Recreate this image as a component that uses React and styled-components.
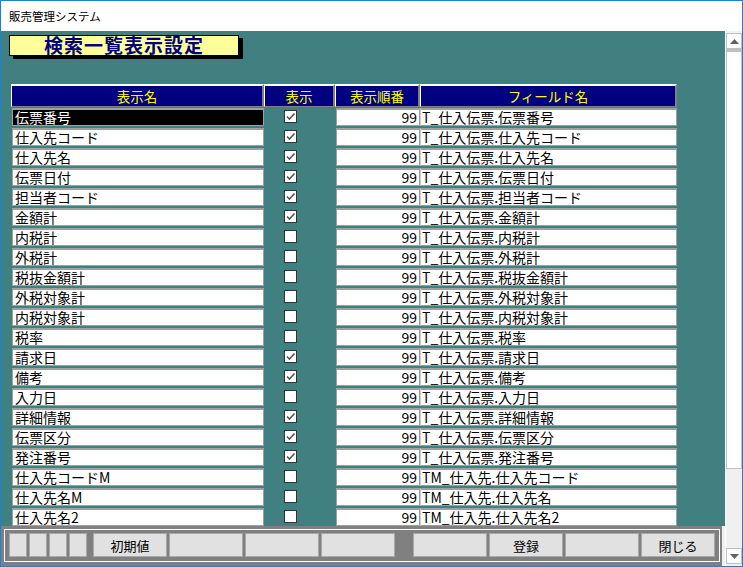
import React from 'react';
import styled, { createGlobalStyle } from 'styled-components';

const rows = [
    { name: '伝票番号', on: true, field: 'T_仕入伝票.伝票番号' },
    { name: '仕入先コード', on: true, field: 'T_仕入伝票.仕入先コード' },
    { name: '仕入先名', on: true, field: 'T_仕入伝票.仕入先名' },
    { name: '伝票日付', on: true, field: 'T_仕入伝票.伝票日付' },
    { name: '担当者コード', on: true, field: 'T_仕入伝票.担当者コード' },
    { name: '金額計', on: true, field: 'T_仕入伝票.金額計' },
    { name: '内税計', on: false, field: 'T_仕入伝票.内税計' },
    { name: '外税計', on: false, field: 'T_仕入伝票.外税計' },
    { name: '税抜金額計', on: false, field: 'T_仕入伝票.税抜金額計' },
    { name: '外税対象計', on: false, field: 'T_仕入伝票.外税対象計' },
    { name: '内税対象計', on: false, field: 'T_仕入伝票.内税対象計' },
    { name: '税率', on: false, field: 'T_仕入伝票.税率' },
    { name: '請求日', on: true, field: 'T_仕入伝票.請求日' },
    { name: '備考', on: true, field: 'T_仕入伝票.備考' },
    { name: '入力日', on: false, field: 'T_仕入伝票.入力日' },
    { name: '詳細情報', on: true, field: 'T_仕入伝票.詳細情報' },
    { name: '伝票区分', on: true, field: 'T_仕入伝票.伝票区分' },
    { name: '発注番号', on: true, field: 'T_仕入伝票.発注番号' },
    { name: '仕入先コードM', on: false, field: 'TM_仕入先.仕入先コード' },
    { name: '仕入先名M', on: false, field: 'TM_仕入先.仕入先名' },
    { name: '仕入先名2', on: false, field: 'TM_仕入先.仕入先名2' },
];

const App = () => {
    return (
        <>
            <GlobalStyle />
            <Window>
                <TitleBar>販売管理システム</TitleBar>
                <Client>
                    <Content>
                        <FormBody>
                            <Caption>検索一覧表示設定</Caption>
                            <Header>
                                <HeadCell>表示名</HeadCell>
                                <HeadCell>表示</HeadCell>
                                <HeadCell>表示順番</HeadCell>
                                <HeadCell>フィールド名</HeadCell>
                            </Header>
                            <RowList>
                                {rows.map((r, i) => (
                                    <Row key={r.name}>
                                        <NameBox selected={i === 0}>{r.name}</NameBox>
                                        <CheckCell>
                                            <CheckBox>
                                                {r.on && (
                                                    <svg width="11" height="11" viewBox="0 0 11 11">
                                                        <path d="M2 5.5 L4.5 8 L9.5 2.5" fill="none" stroke="#555" strokeWidth="1.6" />
                                                    </svg>
                                                )}
                                            </CheckBox>
                                        </CheckCell>
                                        <OrderBox>99</OrderBox>
                                        <FieldBox>{r.field}</FieldBox>
                                    </Row>
                                ))}
                            </RowList>
                        </FormBody>
                        <Footer>
                            <ButtonFrame>
                                <SmallGroup>
                                    <SmallButton />
                                    <SmallButton />
                                    <SmallButton />
                                    <SmallButton />
                                </SmallGroup>
                                <BigGroup>
                                    <Button>初期値</Button>
                                    <Button />
                                    <Button />
                                    <Button />
                                </BigGroup>
                                <BigGroup>
                                    <Button />
                                    <Button>登録</Button>
                                    <Button />
                                    <Button>閉じる</Button>
                                </BigGroup>
                            </ButtonFrame>
                        </Footer>
                    </Content>
                    <ScrollBar>
                        <ArrowButton>
                            <svg width="9" height="5" viewBox="0 0 9 5"><path d="M0 5 L4.5 0 L9 5 Z" fill="#606060" /></svg>
                        </ArrowButton>
                        <Thumb />
                        <Track />
                        <ArrowButton>
                            <svg width="9" height="5" viewBox="0 0 9 5"><path d="M0 0 L9 0 L4.5 5 Z" fill="#606060" /></svg>
                        </ArrowButton>
                    </ScrollBar>
                </Client>
            </Window>
        </>
    )
}

const GlobalStyle = createGlobalStyle`
    body {
        margin: 0;
        font-family: "Noto Sans CJK JP", "Liberation Sans", sans-serif;
    }
    * {
        box-sizing: border-box;
    }
`

const Window = styled.div`
    width: 743px;
    height: 567px;
    border: 1px solid #1883d7;
    display: flex;
    flex-direction: column;
    background: #fff;
`

const TitleBar = styled.div`
    height: 30px;
    padding-left: 8px;
    display: flex;
    align-items: center;
    font-size: 11.5px;
    color: #000;
`

const Client = styled.div`
    flex: 1;
    display: flex;
    min-height: 0;
`

const Content = styled.div`
    width: 724px;
    display: flex;
    flex-direction: column;
    background: #f0f0f0;
`

const FormBody = styled.div`
    flex: 1;
    min-height: 0;
    overflow: hidden;
    background: #408080;
    padding: 4px 0 0 10px;
`

const Caption = styled.div`
    margin-left: -2px;
    width: 230px;
    height: 21px;
    border: 1px solid #000;
    background: #ffff99;
    box-shadow: 4px 3px 0 #000;
    color: #000080;
    font-size: 19px;
    font-weight: bold;
    letter-spacing: 1px;
    line-height: 18px;
    text-align: center;
`

const columns = '253px 71px 85px 257px';

const Header = styled.div`
    margin-top: 28px;
    display: grid;
    grid-template-columns: ${columns};
    height: 21px;
`

const HeadCell = styled.div`
    background: #000080;
    color: #ffff00;
    font-size: 13.5px;
    display: flex;
    align-items: center;
    justify-content: center;
    border-top: 2px solid #fff;
    border-left: 1px solid #fff;
    border-right: 2px solid #808080;
    border-bottom: 1px solid #808080;
`

const RowList = styled.div`
    margin-top: 3px;
    display: flex;
    flex-direction: column;
`

const Row = styled.div`
    display: grid;
    grid-template-columns: ${columns};
    height: 20px;
`

const Box = styled.div`
    height: 18px;
    border: 1px solid #a0a0a0;
    box-shadow: inset 0 1px 0 #a0a0a0;
    background: #fff;
    color: #000;
    font-size: 14px;
    line-height: 16px;
    white-space: nowrap;
    overflow: hidden;
`

const NameBox = styled(Box)`
    margin-left: 1px;
    padding-left: 2px;
    background: ${p => (p.selected ? '#000' : '#fff')};
    color: ${p => (p.selected ? '#fff' : '#000')};
`

const CheckCell = styled.div`
    padding-left: 20px;
    padding-top: 2px;
`

const CheckBox = styled.div`
    width: 13px;
    height: 13px;
    border: 1px solid #333;
    background: #fff;
    display: flex;
    align-items: center;
    justify-content: center;
`

const OrderBox = styled(Box)`
    margin-left: 1px;
    text-align: right;
    padding-right: 2px;
`

const FieldBox = styled(Box)`
    padding-left: 1px;
    border-left-color: #c8c8c8;
`

const Footer = styled.div`
    width: 721px;
    height: 40px;
    background: #808080;
    padding: 3px 2px 4px 3px;
`

const ButtonFrame = styled.div`
    height: 33px;
    border: 1px solid #fff;
    padding: 3px 4px;
    display: flex;
    gap: 6px;
`

const SmallGroup = styled.div`
    display: flex;
    gap: 2px;
`

const BigGroup = styled.div`
    display: flex;
    gap: 2px;
    & + & {
        margin-left: 12px;
    }
`

const Button = styled.div`
    width: 74px;
    height: 24px;
    background: #e1e1e1;
    border: 1px solid #a8a8a8;
    display: flex;
    align-items: center;
    justify-content: center;
    font-size: 13px;
    color: #000;
`

const SmallButton = styled(Button)`
    width: 18px;
`

const ScrollBar = styled.div`
    width: 17px;
    background: #f0f0f0;
    border-left: 1px solid #fff;
    padding: 2px 0 2px 0;
    display: flex;
    flex-direction: column;
`

const ArrowButton = styled.div`
    height: 16px;
    border: 1px solid #c0c0c0;
    background: #fff;
    display: flex;
    align-items: center;
    justify-content: center;
`

const Thumb = styled.div`
    height: 420px;
    border: 1px solid #c0c0c0;
    border-top: 3px solid #c0c0c0;
    background: #fff;
`

const Track = styled.div`
    flex: 1;
`

export default App;
